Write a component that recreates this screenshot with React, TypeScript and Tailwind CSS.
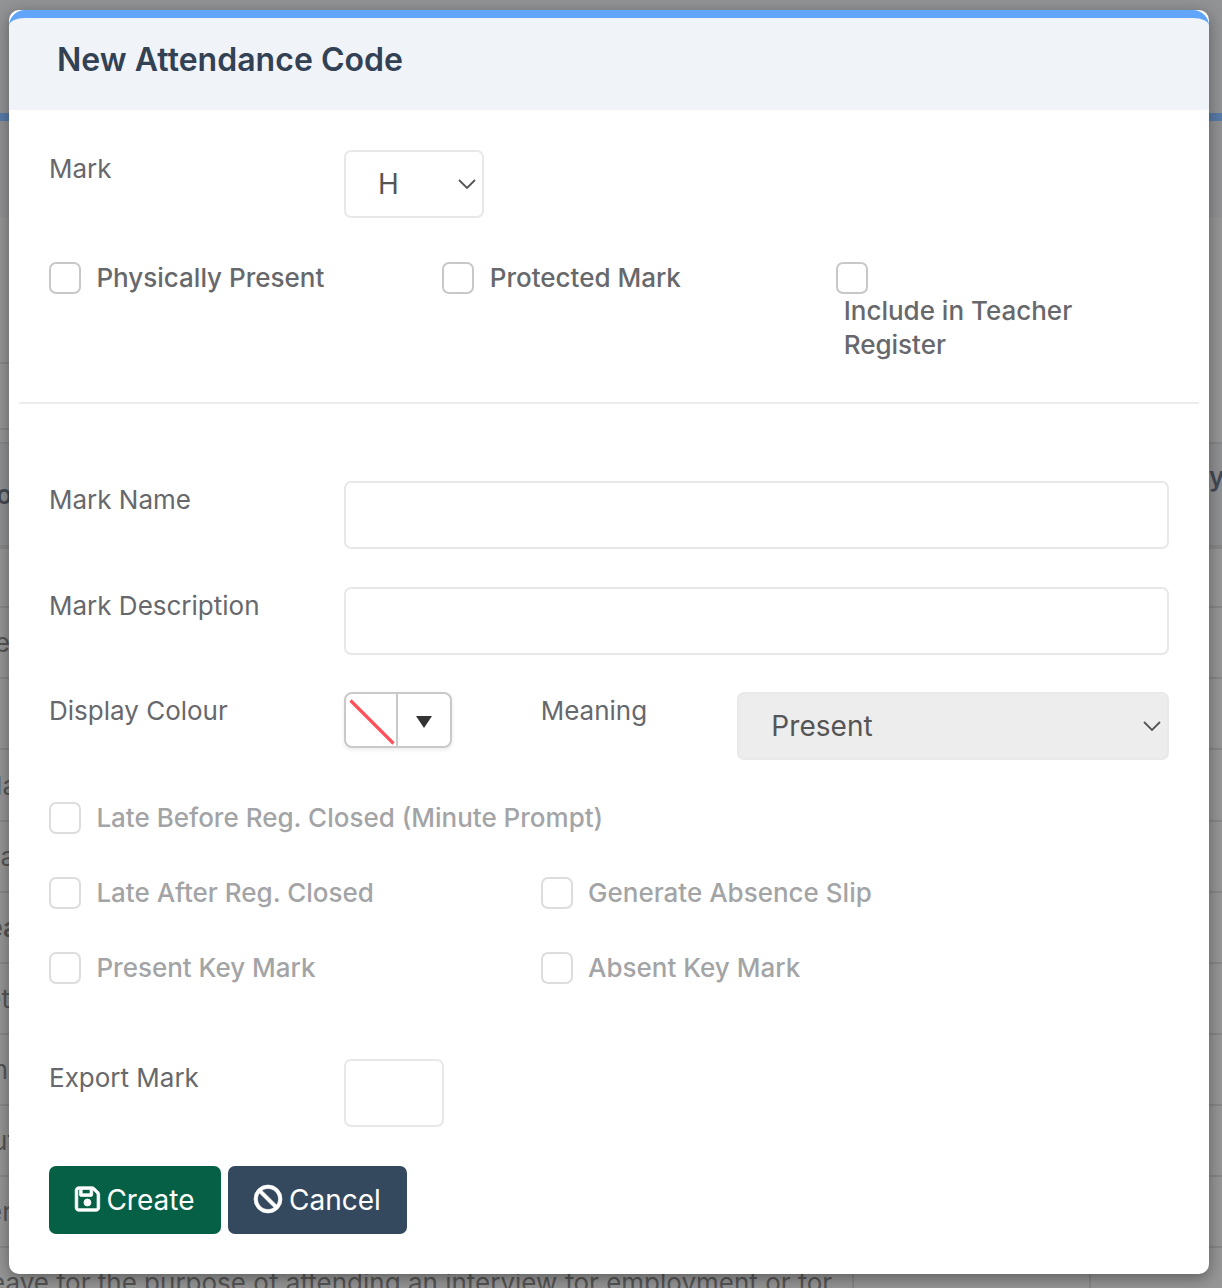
import type { ReactNode } from 'react';
import { FaBan, FaRegFloppyDisk } from 'react-icons/fa6';

// visible tails of the first table column, one per row
const ROW_TAILS = [
  { text: '', width: 'w-[11px]' },
  { text: 'e', width: 'w-[10px]' },
  { text: '', width: 'w-[11px]' },
  { text: 'la', width: 'w-[17px]' },
  { text: 'a', width: 'w-[15px]' },
  { text: 'ea', width: 'w-[18px]', bold: true },
  { text: 'et', width: 'w-[10px]' },
  { text: 'n', width: 'w-[8px]' },
  { text: 'ut', width: 'w-[16px]' },
  { text: 'er', width: 'w-[12px]' },
];

function Chevron() {
  return (
    <svg width="18" height="12" viewBox="0 0 18 12" fill="none" stroke="#555" strokeWidth="1.8">
      <path d="M1 2 9 10 17 2" />
    </svg>
  );
}

function Label({ children }: { children: ReactNode }) {
  return <label className="block pt-px text-[26px] leading-9 text-[#67686c]">{children}</label>;
}

interface CheckProps {
  label: string;
  disabled?: boolean;
}

function Check({ label, disabled }: CheckProps) {
  return (
    <label className={`flex h-8 items-center gap-[15.4px] whitespace-nowrap ${disabled ? 'opacity-60' : ''}`}>
      <span className="size-8 shrink-0 rounded-[7px] border-2 border-[#c8c8c8] bg-white" />
      <span className="text-[26px] font-medium leading-8 text-[#67686c]">{label}</span>
    </label>
  );
}

function Backdrop() {
  return (
    <div className="flex h-full flex-col bg-[#969696]">
      <div className="h-[113px] shrink-0 bg-[#929395]" />
      <div className="h-2 shrink-0 bg-[#587ba9]" />
      <div className="h-24 shrink-0 bg-[#929294]" />
      <div className="flex h-[227px] shrink-0 flex-col justify-end border-b-2 border-[#888]">
        <div className="h-[68px] w-10 border-y-2 border-[#888]" />
        <div className="h-3" />
      </div>
      <div className="flex h-[105px] shrink-0 justify-between border-b-4 border-[#888] bg-[#909193] text-[26px] font-semibold text-[#434a54]">
        <span className="flex w-[12px] justify-end pt-[31px]">o</span>
        <span className="w-[13px] pt-[13px]">y</span>
      </div>
      {ROW_TAILS.map((row, i) => (
        <div
          key={i}
          className={`flex shrink-0 items-center border-b-2 border-[#888] text-[26px] text-[#555] ${i === 0 ? 'h-[59.3px]' : 'h-[71.1px]'}`}
        >
          <span className={`flex justify-end ${row.width} ${row.bold ? 'font-semibold' : ''}`}>{row.text}</span>
        </div>
      ))}
      <div className="flex h-[71px] shrink-0 text-[26px] text-[#555]">
        <div className="w-[854px] shrink-0 whitespace-nowrap border-r-2 border-[#888] pt-[15px]">
          <span className="-ml-[10px]">eave for the purpose of attending an interview for employment or for</span>
        </div>
        <div className="w-[237px] shrink-0 border-r-2 border-[#888]" />
      </div>
    </div>
  );
}

export default function App() {
  return (
    <div className="relative h-[1288px] w-[1222px] overflow-hidden font-[Inter,sans-serif]">
      <Backdrop />

      <div
        role="dialog"
        className="absolute left-[9px] top-[10px] h-[1264px] w-[1200px] rounded-[10px] bg-white shadow-[0_4px_16px_rgba(0,0,0,0.38)]"
      >
        <header className="h-[100px] rounded-t-[16px] border-t-8 border-[#60a5fa] bg-[#f0f3f8] pl-12 pt-[21px]">
          <h2 className="text-[32px] font-semibold leading-[42px] tracking-[0.03px] text-[#334155]">
            New Attendance Code
          </h2>
        </header>

        <form className="px-[10px] pt-10">
          <div className="grid h-28 grid-cols-12">
            <div className="col-span-3 pl-[30px]">
              <Label>Mark</Label>
            </div>
            <div className="col-span-3 pl-[30px]">
              <div className="flex h-[68px] w-[140px] items-center justify-between rounded-[7px] border-2 border-[#e8e8e8] pl-8 pr-[6px] text-[28px] text-[#555]">
                H
                <Chevron />
              </div>
            </div>
          </div>

          <div className="grid h-[140px] grid-cols-3">
            <div className="pl-[30px]">
              <Check label="Physically Present" />
            </div>
            <div className="pl-[30px]">
              <Check label="Protected Mark" />
            </div>
            <div className="pl-[30px]">
              <span className="block size-8 rounded-[7px] border-2 border-[#c8c8c8]" />
              <span className="block w-[260px] pl-2 text-[26px] font-medium leading-[34px] text-[#67686c]">
                Include in Teacher Register
              </span>
            </div>
          </div>
          <hr className="border-t-2 border-[#ececec]" />

          <div className="mt-[77px] grid h-[106px] grid-cols-12">
            <div className="col-span-3 pl-[30px]">
              <Label>Mark Name</Label>
            </div>
            <div className="col-span-9 px-[30px]">
              <input className="block h-[68px] w-full rounded-[7px] border-2 border-[#e8e8e8]" />
            </div>
          </div>
          <div className="grid h-[105px] grid-cols-12">
            <div className="col-span-3 pl-[30px]">
              <Label>Mark Description</Label>
            </div>
            <div className="col-span-9 px-[30px]">
              <input className="block h-[68px] w-full rounded-[7px] border-2 border-[#e8e8e8]" />
            </div>
          </div>
          <div className="grid h-[110px] grid-cols-12">
            <div className="col-span-3 pl-[30px]">
              <Label>Display Colour</Label>
            </div>
            <div className="col-span-2 pl-[30px]">
              <div className="flex h-14 w-[108px] rounded-[8px] border-2 border-[#c9c9c9] shadow-[0_2px_4px_rgba(0,0,0,0.08)]">
                <div className="w-[52px] border-r-2 border-[#c9c9c9]">
                  <svg width="50" height="52" stroke="#ff5059" strokeWidth="3.2">
                    <path d="M4.500 6.500 47.500 49.500" />
                  </svg>
                </div>
                <div className="flex flex-1 items-center justify-center pt-1">
                  <svg width="16" height="12" fill="#333">
                    <path d="M0 0H16L8 12Z" />
                  </svg>
                </div>
              </div>
            </div>
            <div className="col-span-2 pl-[30px]">
              <Label>Meaning</Label>
            </div>
            <div className="col-span-5 px-[30px]">
              <div className="flex h-[68px] items-center justify-between rounded-[7px] border-2 border-[#e9e9e9] bg-[#ededed] pl-8 pr-[6px] text-[28px] tracking-[0.05px] text-[#555]">
                Present
                <Chevron />
              </div>
            </div>
          </div>

          <div className="grid h-[257px] auto-rows-[75px] grid-cols-12">
            <div className="col-span-12 pl-[30px]">
              <Check label="Late Before Reg. Closed (Minute Prompt)" disabled />
            </div>
            <div className="col-span-5 pl-[30px]">
              <Check label="Late After Reg. Closed" disabled />
            </div>
            <div className="col-span-7 pl-[30px]">
              <Check label="Generate Absence Slip" disabled />
            </div>
            <div className="col-span-5 pl-[30px]">
              <Check label="Present Key Mark" disabled />
            </div>
            <div className="col-span-7 pl-[30px]">
              <Check label="Absent Key Mark" disabled />
            </div>
          </div>

          <div className="grid h-[107px] grid-cols-12">
            <div className="col-span-3 pl-[30px]">
              <Label>Export Mark</Label>
            </div>
            <div className="col-span-9 pl-[30px]">
              <input className="block h-[68px] w-[100px] rounded-[7px] border-2 border-[#e8e8e8]" />
            </div>
          </div>

          <div className="flex gap-[7px] pl-[30px] text-[28px] text-white">
            <button type="button" className="flex h-[68px] w-[172px] items-center gap-[7px] rounded-[7px] bg-[#066046] pl-[25.5px]">
              <FaRegFloppyDisk className="h-7 w-[24.9px] -translate-y-px overflow-visible stroke-[14px]" />
              Create
            </button>
            <button type="button" className="flex h-[68px] w-[179px] items-center gap-[7px] rounded-[7px] bg-[#34495e] pl-[26px]">
              <FaBan className="size-7 -translate-y-px overflow-visible stroke-[12px]" />
              Cancel
            </button>
          </div>
        </form>
      </div>
    </div>
  );
}
